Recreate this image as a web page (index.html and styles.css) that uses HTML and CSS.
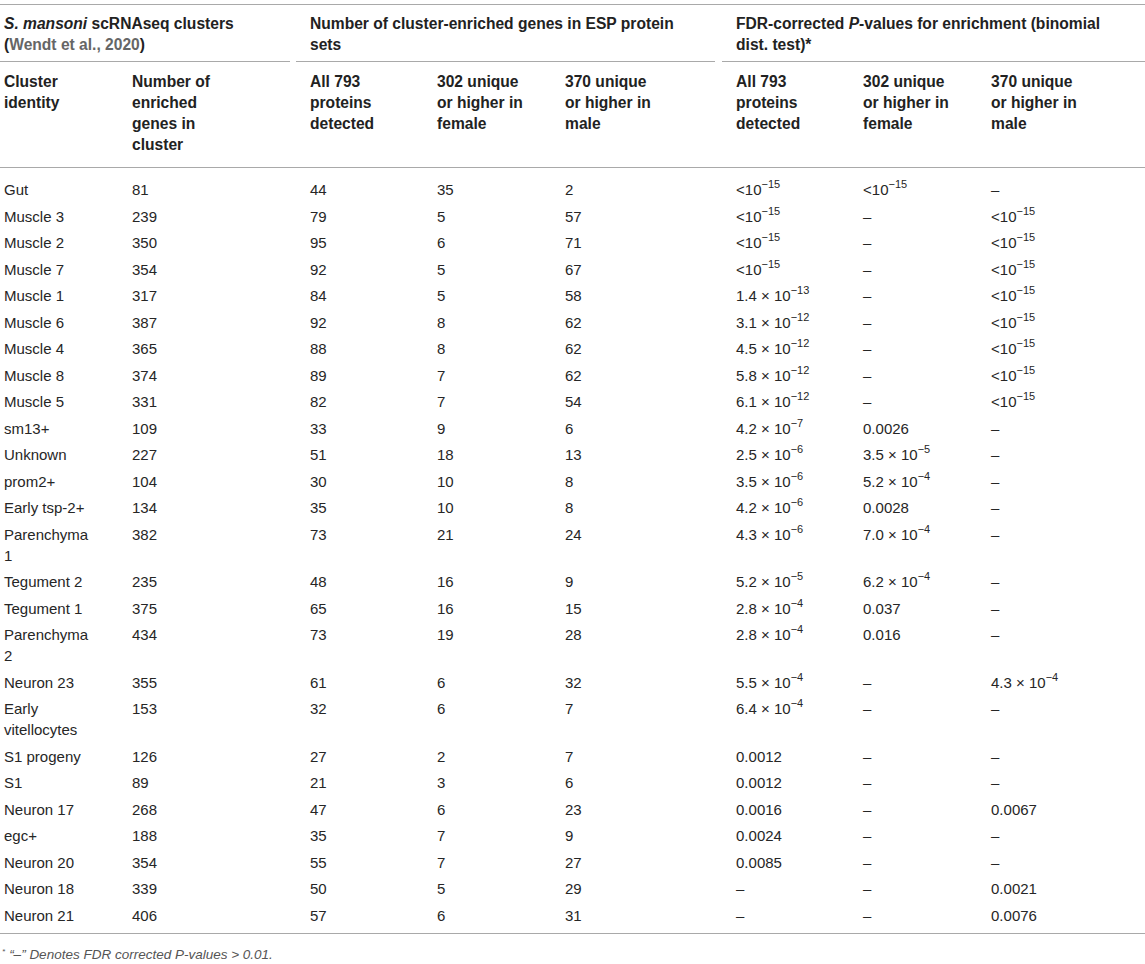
FILE: index.html
```html
<!DOCTYPE html>
<html lang="en">
<head>
<meta charset="utf-8">
<title>Table</title>
<link rel="stylesheet" href="styles.css">
</head>
<body>
<table class="tbl">
  <colgroup>
    <col class="c1"><col class="c2"><col class="c3"><col class="c4"><col class="c5"><col class="c6"><col class="c7"><col class="c8">
  </colgroup>
  <thead>
    <tr class="grp">
      <th colspan="2"><div class="g g1"><i>S. mansoni</i> scRNAseq clusters<br>(<span class="cite">Wendt et al., 2020</span>)</div></th>
      <th colspan="3"><div class="g g2">Number of cluster-enriched genes in ESP protein<br>sets</div></th>
      <th colspan="3"><div class="g g3">FDR-corrected <i>P</i>-values for enrichment (binomial<br>dist. test)*</div></th>
    </tr>
    <tr class="sub">
      <th>Cluster<br>identity</th>
      <th>Number of<br>enriched<br>genes in<br>cluster</th>
      <th>All 793<br>proteins<br>detected</th>
      <th>302 unique<br>or higher in<br>female</th>
      <th>370 unique<br>or higher in<br>male</th>
      <th>All 793<br>proteins<br>detected</th>
      <th>302 unique<br>or higher in<br>female</th>
      <th>370 unique<br>or higher in<br>male</th>
    </tr>
  </thead>
  <tbody>
    <tr><td>Gut</td><td>81</td><td>44</td><td>35</td><td>2</td><td>&lt;10<sup>−15</sup></td><td>&lt;10<sup>−15</sup></td><td>–</td></tr>
    <tr><td>Muscle 3</td><td>239</td><td>79</td><td>5</td><td>57</td><td>&lt;10<sup>−15</sup></td><td>–</td><td>&lt;10<sup>−15</sup></td></tr>
    <tr><td>Muscle 2</td><td>350</td><td>95</td><td>6</td><td>71</td><td>&lt;10<sup>−15</sup></td><td>–</td><td>&lt;10<sup>−15</sup></td></tr>
    <tr><td>Muscle 7</td><td>354</td><td>92</td><td>5</td><td>67</td><td>&lt;10<sup>−15</sup></td><td>–</td><td>&lt;10<sup>−15</sup></td></tr>
    <tr><td>Muscle 1</td><td>317</td><td>84</td><td>5</td><td>58</td><td>1.4 × 10<sup>−13</sup></td><td>–</td><td>&lt;10<sup>−15</sup></td></tr>
    <tr><td>Muscle 6</td><td>387</td><td>92</td><td>8</td><td>62</td><td>3.1 × 10<sup>−12</sup></td><td>–</td><td>&lt;10<sup>−15</sup></td></tr>
    <tr><td>Muscle 4</td><td>365</td><td>88</td><td>8</td><td>62</td><td>4.5 × 10<sup>−12</sup></td><td>–</td><td>&lt;10<sup>−15</sup></td></tr>
    <tr><td>Muscle 8</td><td>374</td><td>89</td><td>7</td><td>62</td><td>5.8 × 10<sup>−12</sup></td><td>–</td><td>&lt;10<sup>−15</sup></td></tr>
    <tr><td>Muscle 5</td><td>331</td><td>82</td><td>7</td><td>54</td><td>6.1 × 10<sup>−12</sup></td><td>–</td><td>&lt;10<sup>−15</sup></td></tr>
    <tr><td>sm13+</td><td>109</td><td>33</td><td>9</td><td>6</td><td>4.2 × 10<sup>−7</sup></td><td>0.0026</td><td>–</td></tr>
    <tr><td>Unknown</td><td>227</td><td>51</td><td>18</td><td>13</td><td>2.5 × 10<sup>−6</sup></td><td>3.5 × 10<sup>−5</sup></td><td>–</td></tr>
    <tr><td>prom2+</td><td>104</td><td>30</td><td>10</td><td>8</td><td>3.5 × 10<sup>−6</sup></td><td>5.2 × 10<sup>−4</sup></td><td>–</td></tr>
    <tr><td>Early tsp-2+</td><td>134</td><td>35</td><td>10</td><td>8</td><td>4.2 × 10<sup>−6</sup></td><td>0.0028</td><td>–</td></tr>
    <tr><td>Parenchyma<br>1</td><td>382</td><td>73</td><td>21</td><td>24</td><td>4.3 × 10<sup>−6</sup></td><td>7.0 × 10<sup>−4</sup></td><td>–</td></tr>
    <tr><td>Tegument 2</td><td>235</td><td>48</td><td>16</td><td>9</td><td>5.2 × 10<sup>−5</sup></td><td>6.2 × 10<sup>−4</sup></td><td>–</td></tr>
    <tr><td>Tegument 1</td><td>375</td><td>65</td><td>16</td><td>15</td><td>2.8 × 10<sup>−4</sup></td><td>0.037</td><td>–</td></tr>
    <tr><td>Parenchyma<br>2</td><td>434</td><td>73</td><td>19</td><td>28</td><td>2.8 × 10<sup>−4</sup></td><td>0.016</td><td>–</td></tr>
    <tr><td>Neuron 23</td><td>355</td><td>61</td><td>6</td><td>32</td><td>5.5 × 10<sup>−4</sup></td><td>–</td><td>4.3 × 10<sup>−4</sup></td></tr>
    <tr><td>Early<br>vitellocytes</td><td>153</td><td>32</td><td>6</td><td>7</td><td>6.4 × 10<sup>−4</sup></td><td>–</td><td>–</td></tr>
    <tr><td>S1 progeny</td><td>126</td><td>27</td><td>2</td><td>7</td><td>0.0012</td><td>–</td><td>–</td></tr>
    <tr><td>S1</td><td>89</td><td>21</td><td>3</td><td>6</td><td>0.0012</td><td>–</td><td>–</td></tr>
    <tr><td>Neuron 17</td><td>268</td><td>47</td><td>6</td><td>23</td><td>0.0016</td><td>–</td><td>0.0067</td></tr>
    <tr><td>egc+</td><td>188</td><td>35</td><td>7</td><td>9</td><td>0.0024</td><td>–</td><td>–</td></tr>
    <tr><td>Neuron 20</td><td>354</td><td>55</td><td>7</td><td>27</td><td>0.0085</td><td>–</td><td>–</td></tr>
    <tr><td>Neuron 18</td><td>339</td><td>50</td><td>5</td><td>29</td><td>–</td><td>–</td><td>0.0021</td></tr>
    <tr><td>Neuron 21</td><td>406</td><td>57</td><td>6</td><td>31</td><td>–</td><td>–</td><td>0.0076</td></tr>
  </tbody>
</table>
<p class="note"><sup>*</sup>“–” Denotes FDR corrected P-values &gt; 0.01.</p>
</body>
</html>
```

FILE: styles.css
```css
html, body {
  margin: 0;
  padding: 0;
  background: #fff;
}
body {
  font-family: "Liberation Sans", Arial, Helvetica, sans-serif;
  font-size: 15px;
  color: #262626;
}
.tbl {
  margin-top: 4px;
  width: 1145px;
  border-collapse: collapse;
  table-layout: fixed;
  border-top: 1px solid #a9a9a9;
  border-bottom: 1px solid #a9a9a9;
}
.c1 { width: 128px; }
.c2 { width: 178px; }
.c3 { width: 127px; }
.c4 { width: 128px; }
.c5 { width: 171px; }
.c6 { width: 127px; }
.c7 { width: 128px; }
.c8 { width: 158px; }

th {
  text-align: left;
  vertical-align: top;
  font-weight: bold;
  font-size: 15.6px;
  line-height: 21px;
  color: #222;
  white-space: nowrap;
}
.grp th {
  padding: 0;
}
.g {
  padding: 7.5px 4px 6px 4px;
  border-bottom: 1px solid #a9a9a9;
}
.g1 { margin-right: 16px; }
.g2 { margin-left: -10px; margin-right: 17px; padding-left: 14px; }
.g3 { margin-left: -10px; padding-left: 14px; }
.cite { color: #666; }

.sub th {
  padding: 9.5px 4px 11.5px 4px;
  border-bottom: 1px solid #a9a9a9;
}
td {
  padding: 2.75px 4px;
  line-height: 21px;
  vertical-align: top;
  white-space: nowrap;
}
tbody tr:first-child td { padding-top: 11.5px; }
tbody tr:last-child td { padding-bottom: 7.5px; }

sup {
  font-size: 11px;
  line-height: 0;
  vertical-align: 7px;
}
.note {
  margin: 13px 0 0 2px;
  font-size: 13.5px;
  line-height: 16px;
  font-style: italic;
  color: #555;
}
.note sup {
  font-size: 8px;
  vertical-align: 5px;
  margin-right: 4px;
}
```
